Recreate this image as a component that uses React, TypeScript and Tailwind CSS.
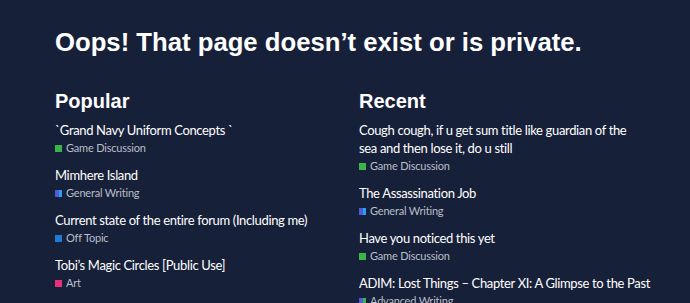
import React from 'react';

type Topic = {
  title: string;
  category: string;
  colors: string[];
};

const popular: Topic[] = [
  { title: '`Grand Navy Uniform Concepts `', category: 'Game Discussion', colors: ['bg-[#3ab54a]'] },
  { title: 'Mimhere Island', category: 'General Writing', colors: ['bg-[#4f5bd5]', 'bg-[#2a9df4]'] },
  { title: 'Current state of the entire forum (Including me)', category: 'Off Topic', colors: ['bg-[#1e7ad6]'] },
  { title: 'Tobi’s Magic Circles [Public Use]', category: 'Art', colors: ['bg-[#e8307a]'] },
];

const recent: Topic[] = [
  { title: 'Cough cough, if u get sum title like guardian of the\nsea and then lose it, do u still', category: 'Game Discussion', colors: ['bg-[#3ab54a]'] },
  { title: 'The Assassination Job', category: 'General Writing', colors: ['bg-[#4f5bd5]', 'bg-[#2a9df4]'] },
  { title: 'Have you noticed this yet', category: 'Game Discussion', colors: ['bg-[#3ab54a]'] },
  { title: 'ADIM: Lost Things – Chapter XI: A Glimpse to the Past', category: 'Advanced Writing', colors: ['bg-[#4f5bd5]', 'bg-[#3ab54a]'] },
];

function TopicList({ heading, topics, width }: { heading: string; topics: Topic[]; width: string }) {
  return (
    <div className={`${width} shrink-0`}>
      <h2 className="font-['Liberation_Sans',Arial,sans-serif] font-bold text-[20px] leading-[24px] text-white mb-[8px]">
        {heading}
      </h2>
      <ul>
        {topics.map(t => (
          <li key={t.title} className="mb-[9px]">
            <a className="block whitespace-pre-line text-[13px] leading-[18px] tracking-[-0.35px] text-white">{t.title}</a>
            <div className="flex items-baseline gap-[4px] text-[11px] leading-[18px] tracking-[-0.2px] text-[#b9bec8]">
              <span className="flex w-[7px] h-[7px] shrink-0">
                {t.colors.map((c, i) => (
                  <span key={i} className={`flex-1 h-full ${c}`} />
                ))}
              </span>
              {t.category}
            </div>
          </li>
        ))}
      </ul>
    </div>
  );
}

export default function App() {
  return (
    <div className="min-h-screen bg-[#172039] font-['Lato','Noto_Sans',sans-serif] px-[55px] pt-[25px] overflow-hidden">
      <h1 className="font-['Liberation_Sans',Arial,sans-serif] font-bold text-[25.7px] leading-[34px] text-white mb-[30px] whitespace-nowrap">
        Oops! That page doesn’t exist or is private.
      </h1>
      <div className="flex">
        <TopicList heading="Popular" topics={popular} width="w-[304px]" />
        <TopicList heading="Recent" topics={recent} width="w-[300px]" />
      </div>
    </div>
  );
}
